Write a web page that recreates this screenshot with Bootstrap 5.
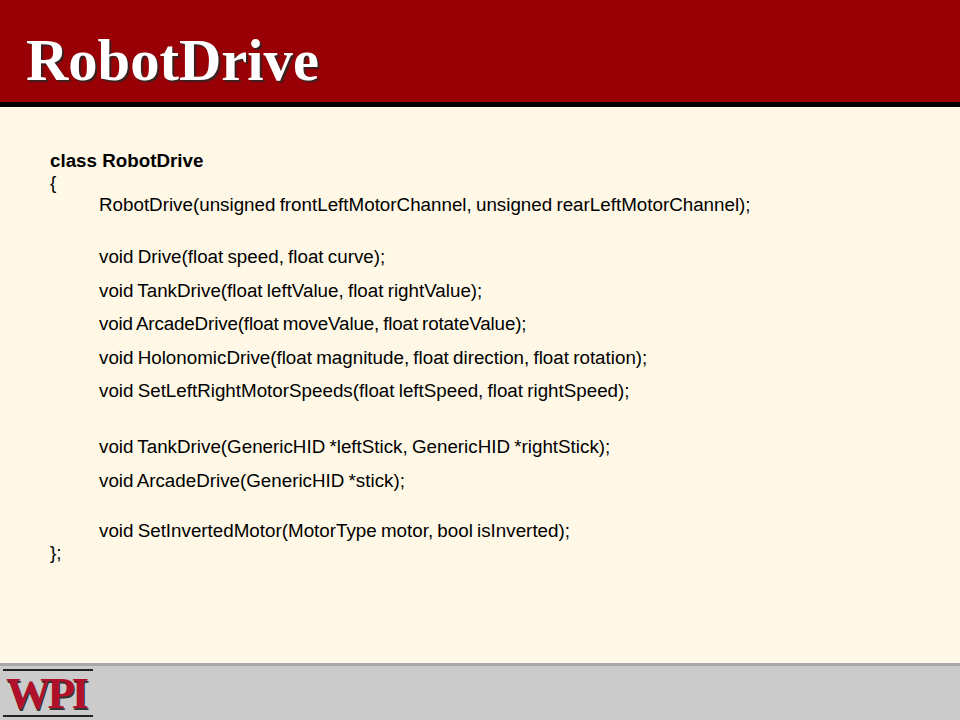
<!DOCTYPE html>
<html lang="en">
<head>
<meta charset="utf-8">
<title>RobotDrive</title>
<link href="https://cdn.jsdelivr.net/npm/bootstrap@5.3.0/dist/css/bootstrap.min.css" rel="stylesheet">
<style>
html,body{margin:0;height:720px;overflow:hidden}
.slide{width:960px;height:720px;background:#fff8e6}
.slide-head{height:107px;background:#990005;border-bottom:5px solid #000;padding:27px 0 0 26px}
.slide-title{margin:0;font:700 58.6px/1.15 "Liberation Serif",serif;color:#fff;text-shadow:2px 2px 1px #3a2020}
.slide-body{height:556px;padding-top:43px;padding-left:50px;font:18.8px/22px "Liberation Sans",sans-serif;color:#000;word-spacing:-1px}
.code-line{height:22px;white-space:pre}
.code-head{word-spacing:0}
.code-tight{letter-spacing:-.14px}
.ind{padding-left:49px}
.gap-a{margin-top:11.5px}
.gap-b{margin-top:30px}
.gap-c{margin-top:34px}
.gap-d{margin-top:28px}
.slide-foot{height:57px;background:#cbcbcb;border-top:3px solid #a9a9a9;padding:3px 0 0 3px}
.wpi-logo{width:90px;border-top:2px solid #222;border-bottom:2px solid #222;height:48px;padding-left:3px;text-align:left;white-space:nowrap;font:700 45px/44px "Liberation Serif",serif;letter-spacing:-3.5px;color:#b0102a;text-shadow:1px 2px 0 #333}
</style>
</head>
<body>
<div class="slide d-flex flex-column">
  <header class="slide-head"><h1 class="slide-title">RobotDrive</h1></header>
  <main class="slide-body">
    <div class="code-line code-head fw-bold">class RobotDrive</div>
    <div class="code-line">{</div>
    <div class="code-line ind">RobotDrive(unsigned frontLeftMotorChannel, unsigned rearLeftMotorChannel);</div>
    <div class="code-line ind gap-b">void Drive(float speed, float curve);</div>
    <div class="code-line ind gap-a">void TankDrive(float leftValue, float rightValue);</div>
    <div class="code-line ind gap-a code-tight">void ArcadeDrive(float moveValue, float rotateValue);</div>
    <div class="code-line ind gap-a">void HolonomicDrive(float magnitude, float direction, float rotation);</div>
    <div class="code-line ind gap-a">void SetLeftRightMotorSpeeds(float leftSpeed, float rightSpeed);</div>
    <div class="code-line ind gap-c">void TankDrive(GenericHID *leftStick, GenericHID *rightStick);</div>
    <div class="code-line ind gap-a">void ArcadeDrive(GenericHID *stick);</div>
    <div class="code-line ind gap-d">void SetInvertedMotor(MotorType motor, bool isInverted);</div>
    <div class="code-line">};</div>
  </main>
  <footer class="slide-foot"><div class="wpi-logo">WPI</div></footer>
</div>
</body>
</html>
